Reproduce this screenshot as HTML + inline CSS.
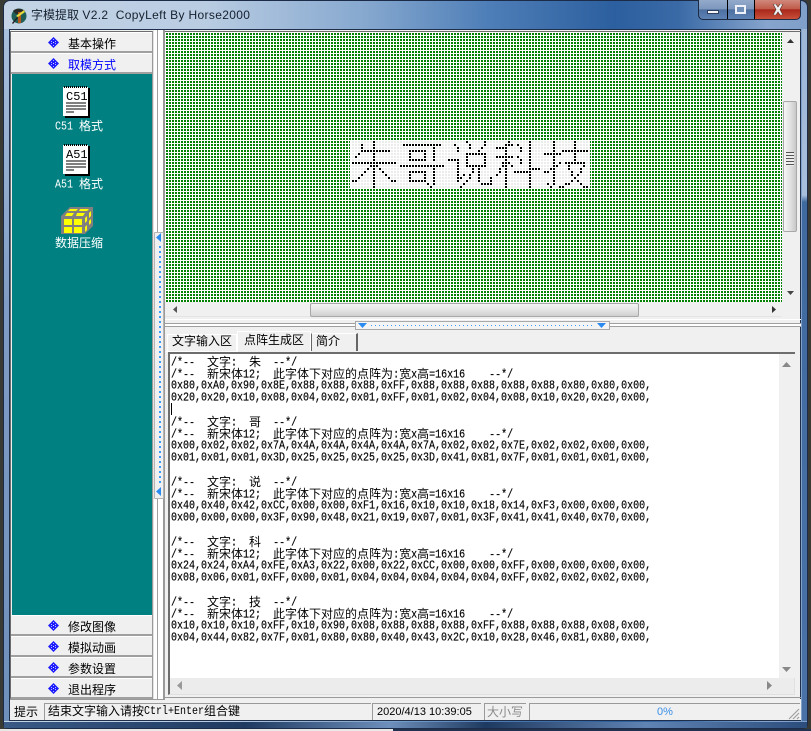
<!DOCTYPE html>
<html lang="zh">
<head>
<meta charset="utf-8">
<title>字模提取</title>
<style>
html,body{margin:0;padding:0;width:811px;height:731px;overflow:hidden;background:#3a3a34}
*{box-sizing:border-box}
.a{position:absolute}
body{font-family:"Liberation Sans","WenQuanYi Zen Hei","Noto Sans CJK SC",sans-serif;font-size:12px;color:#000}
#frame{left:3px;top:0;width:805px;height:729px;border:1px solid #1c2c48;border-radius:7px 7px 5px 5px;
background:linear-gradient(90deg,#c4d4e6 0,#b9cce2 25%,#86a8cf 45%,#4f7fb8 60%,#2c5f9f 76%,#3a6aa6 84%,#86a4cd 95%,#7f9fc9 100%)}
#lf{left:4px;top:29px;width:5px;height:692px;background:linear-gradient(180deg,#a9c0dc,#7f9cc4 40%,#6f90bb 100%)}
#rf{left:802px;top:29px;width:5px;height:692px;background:linear-gradient(180deg,#9db6d6 0,#a8bfdc 24%,#3f6a9f 25%,#4a72a6 100%)}
#bf{left:4px;top:722px;width:803px;height:6px;background:linear-gradient(90deg,#3a5a86,#1f3a60 30%,#6d8fbb 48%,#1f3a60 60%,#5f83b3 80%,#2c4d7c)}
#client{left:9px;top:29px;width:792px;height:692px;background:#f0f0f0;border:1px solid #1f2f4a}
.btn{left:11px;width:141px;height:21px;background:#f0f0f0;border-bottom:2px solid #a0a0a0;border-top:1px solid #fff}
.btn .t{position:absolute;left:57px;top:2px;white-space:nowrap}
.btn svg{position:absolute;left:37px;top:4px}
.sb{background:#f0f0f0}
.th{background:linear-gradient(180deg,#f4f4f4,#e4e4e4 50%,#cfcfcf);border:1px solid #a8a8a8;border-radius:2px}
.dotg{background-color:#008000;background-image:linear-gradient(90deg,transparent 2px,#fff 2px),linear-gradient(180deg,transparent 2px,#fff 2px);background-size:3px 3px;background-repeat:repeat}
.dotw{background-color:#ececec;background-image:linear-gradient(90deg,transparent 2px,#fff 2px),linear-gradient(180deg,transparent 2px,#fff 2px);background-size:3px 3px;background-repeat:repeat}
#memo{left:168px;top:352px;width:627px;height:326px;background:#fff;border-top:2px solid #6d6d6d;border-left:2px solid #6d6d6d;overflow:hidden}
#memo div{position:absolute;left:1px;height:12px;line-height:12px;white-space:pre;font-family:"Liberation Mono",monospace;font-size:10px;-webkit-text-stroke:.15px #000}
#memo div.h{transform:scaleY(1.2);transform-origin:0 80%;margin-top:2px}
#memo b{font-weight:normal;font-family:"WenQuanYi Zen Hei","Noto Sans CJK SC",sans-serif;font-size:12px;-webkit-text-stroke:0}
i{font-style:normal;display:inline-block;transform:scaleY(1.2);transform-origin:0 80%}
.tab{position:absolute;text-align:center;line-height:16px}
.lbl{position:absolute;color:#fff;white-space:pre;font-size:12px;line-height:12px}
.st{position:absolute;top:703px;height:17px;border-left:1px solid #9a9a9a;border-top:1px solid #9a9a9a;line-height:16px;white-space:nowrap}
</style>
</head>
<body>
<svg width="0" height="0" style="position:absolute"><defs>
<g id="dm"><path d="M5.500 0L11 5.500 5.500 11 0 5.500z" fill="#1c1cff"/><path d="M5 2h1v1H5zM3 4h1v1H3zM7 4h1v1H7zM3 6h1v1H3zM7 6h1v1H7zM5 8h1v1H5z" fill="#b8b8ff"/><path d="M5 5h1v1H5z" fill="#e0e0ff"/></g>
</defs></svg>
<div class="a" id="frame"></div>
<div class="a" id="lf"></div>
<div class="a" id="rf"></div>
<div class="a" id="bf"></div>
<div class="a" style="left:0;top:729px;width:393px;height:2px;background:#e8e8e8"></div>
<div class="a" style="left:393px;top:729px;width:418px;height:2px;background:#20324f"></div>

<!-- title icon -->
<svg class="a" style="left:10px;top:7px" width="18" height="18" viewBox="0 0 18 18">
<ellipse cx="9" cy="9" rx="7.500" ry="7.500" fill="#1f5f58"/>
<path d="M3 4c2-3 9-3 12 0l-3 3H6z" fill="#2a2a2a"/>
<path d="M8 5h3v11H8z" fill="#b5561d"/>
<path d="M6 9l8-6 1 2-7 5z" fill="#e6dc3c"/>
<path d="M2 16l5-6 1 1-5 6z" fill="#222"/>
</svg>
<div class="a" style="left:31px;top:7px;white-space:pre;color:#15202e;font-size:12px;line-height:16px"><span>字模提取</span> <span style="letter-spacing:.34px">V2.2  CopyLeft By Horse2000</span></div>

<!-- caption buttons -->
<div class="a" style="left:698px;top:0;width:103px;height:20px;border:1px solid #1d2c46;border-top:0;border-radius:0 0 5px 5px;overflow:hidden;background:#000">
  <div class="a" style="left:0;top:0;width:28px;height:19px;background:linear-gradient(180deg,#93aacb,#7c97bd 48%,#4c6f9f 50%,#5c82b4)"></div>
  <div class="a" style="left:29px;top:0;width:26px;height:19px;background:linear-gradient(180deg,#93aacb,#7c97bd 48%,#4c6f9f 50%,#5c82b4)"></div>
  <div class="a" style="left:56px;top:0;width:46px;height:19px;background:linear-gradient(180deg,#d0897c,#c05a4a 48%,#a8261a 50%,#c9503a)"></div>
  <div class="a" style="left:8px;top:10px;width:12px;height:4px;background:#f4f6fa;border:1px solid #2d3f5c"></div>
  <div class="a" style="left:36px;top:5px;width:11px;height:9px;border:2px solid #eef2f8;background:#6f8fb8"></div>
  <svg class="a" style="left:72px;top:4px" width="14" height="11" viewBox="0 0 14 11"><path d="M2 0h3l2 3 2-3h3L9 5.500 12 11H9L7 8 5 11H2l3-5.500z" fill="#eef0f2" stroke="#5a2a24" stroke-width=".6"/></svg>
</div>

<div class="a" id="client"></div>

<!-- left panel -->
<div class="a" style="left:10px;top:31px;width:143px;height:668px;border:1px solid #9a9a9a;border-left-color:#6d6d6d;border-top-color:#6d6d6d;background:#f0f0f0"></div>
<div class="a btn" style="top:32px"><svg width="11" height="11"><use href="#dm"/></svg><span class="t">基本操作</span></div>
<div class="a btn" style="top:53px;color:#00f"><svg width="11" height="11"><use href="#dm"/></svg><span class="t">取模方式</span></div>
<div class="a" style="left:12px;top:74px;width:140px;height:541px;background:#008080"></div>

<!-- C51 icon -->
<svg class="a" style="left:63px;top:86px" width="28" height="32" viewBox="0 0 28 32">
<rect x="2" y="2" width="25" height="30" fill="#000"/><rect x="0" y="1" width="25" height="29" fill="#fff"/>
<path d="M1 1h24" stroke="#000" stroke-width="2" stroke-dasharray="1 1"/>
<path d="M3 17h20M3 20h20M3 23h20M3 26h8" stroke="#000"/>
<text x="3" y="14" font-family="Liberation Mono,monospace" font-size="12" fill="#000">C51</text>
</svg>
<div class="lbl" style="left:55px;top:121px;font-family:'Liberation Mono','WenQuanYi Zen Hei',monospace"><i style="font-size:10px">C51 </i>格式</div>

<!-- A51 icon -->
<svg class="a" style="left:63px;top:144px" width="28" height="32" viewBox="0 0 28 32">
<rect x="2" y="2" width="25" height="30" fill="#000"/><rect x="0" y="1" width="25" height="29" fill="#fff"/>
<path d="M1 1h24" stroke="#000" stroke-width="2" stroke-dasharray="1 1"/>
<path d="M3 17h20M3 20h20M3 23h20M3 26h8" stroke="#000"/>
<text x="3" y="14" font-family="Liberation Mono,monospace" font-size="12" fill="#000">A51</text>
</svg>
<div class="lbl" style="left:55px;top:179px;font-family:'Liberation Mono','WenQuanYi Zen Hei',monospace"><i style="font-size:10px">A51 </i>格式</div>

<!-- cube icon -->
<svg class="a" style="left:61px;top:206px" width="33" height="28" viewBox="0 0 33 28">
<path d="M0 10L9 1h23v19l-8 8H0z" fill="#808080"/>
<path d="M3 13h8v6H3zM13 13h8v6h-8zM3 21h8v6H3zM13 21h8v6h-8z" fill="#ff0"/>
<path d="M9 3h8l-2 2H7zM19 3h9l-2 2h-8zM6 7h7l-2 3H4zM16 7h8l-2 3h-7z" fill="#ff0"/>
<path d="M24 12l2-2v5l-2 2zM28 7l2-2v5l-2 2zM24 21l2-2v5l-2 2zM28 15l2-2v4l-2 2z" fill="#ff0"/>
</svg>
<div class="lbl" style="left:55px;top:237px">数据压缩</div>

<div class="a btn" style="top:615px"><svg width="11" height="11"><use href="#dm"/></svg><span class="t">修改图像</span></div>
<div class="a btn" style="top:636px"><svg width="11" height="11"><use href="#dm"/></svg><span class="t">模拟动画</span></div>
<div class="a btn" style="top:657px"><svg width="11" height="11"><use href="#dm"/></svg><span class="t">参数设置</span></div>
<div class="a btn" style="top:678px"><svg width="11" height="11"><use href="#dm"/></svg><span class="t">退出程序</span></div>

<!-- vertical splitter -->
<div class="a" style="left:153px;top:30px;width:12px;height:670px;background:#fff;border-left:1px solid #e4e4e4;border-right:2px solid #9a9a9a"></div>
<div class="a" style="left:157px;top:30px;width:1px;height:670px;background:#a0a0a0"></div>
<div class="a" style="left:154px;top:232px;width:10px;height:267px;background:#f0f0f0;border:1px solid #b4b4b4;border-radius:1px"></div>
<div class="a" style="left:159px;top:246px;width:2px;height:240px;background:repeating-linear-gradient(180deg,#3a9aff 0 2px,transparent 2px 5px)"></div>
<svg class="a" style="left:156px;top:233px" width="6" height="10"><path d="M5 0v9L0 4.500z" fill="#2a8af0"/></svg>
<svg class="a" style="left:156px;top:487px" width="6" height="10"><path d="M5 0v9L0 4.500z" fill="#2a8af0"/></svg>

<!-- top border of grid -->
<div class="a" style="left:165px;top:31px;width:636px;height:1px;background:#6d6d6d"></div>

<!-- dot grid -->
<div class="a" style="left:165px;top:32px;width:617px;height:270px;background:#fff"></div>
<div class="a dotg" style="left:166px;top:33px;width:616px;height:269px"></div>
<div class="a" style="left:350px;top:140px;width:240px;height:49px;background:#fff"></div>
<div class="a dotw" style="left:352px;top:141px;width:238px;height:48px"></div>
<svg class="a" id="grid" style="left:165px;top:32px;shape-rendering:crispEdges" width="617" height="270" viewBox="0 0 617 270">
<path id="dots" fill="#000" d=""/>
</svg>
<script>
(function(){
var h=[
[0x80,0xA0,0x90,0x8E,0x88,0x88,0x88,0xFF,0x88,0x88,0x88,0x88,0x88,0x80,0x80,0x00,0x20,0x20,0x10,0x08,0x04,0x02,0x01,0xFF,0x01,0x02,0x04,0x08,0x10,0x20,0x20,0x00],
[0x00,0x02,0x02,0x7A,0x4A,0x4A,0x4A,0x4A,0x7A,0x02,0x02,0x7E,0x02,0x02,0x00,0x00,0x01,0x01,0x01,0x3D,0x25,0x25,0x25,0x25,0x3D,0x41,0x81,0x7F,0x01,0x01,0x01,0x00],
[0x40,0x40,0x42,0xCC,0x00,0x00,0xF1,0x16,0x10,0x10,0x18,0x14,0xF3,0x00,0x00,0x00,0x00,0x00,0x00,0x3F,0x90,0x48,0x21,0x19,0x07,0x01,0x3F,0x41,0x41,0x40,0x70,0x00],
[0x24,0x24,0xA4,0xFE,0xA3,0x22,0x00,0x22,0xCC,0x00,0x00,0xFF,0x00,0x00,0x00,0x00,0x08,0x06,0x01,0xFF,0x00,0x01,0x04,0x04,0x04,0x04,0x04,0xFF,0x02,0x02,0x02,0x00],
[0x10,0x10,0x10,0xFF,0x10,0x90,0x08,0x88,0x88,0x88,0xFF,0x88,0x88,0x88,0x08,0x00,0x04,0x44,0x82,0x7F,0x01,0x80,0x80,0x40,0x43,0x2C,0x10,0x28,0x46,0x81,0x80,0x00]];
var d="";
for(var c=0;c<5;c++)for(var p=0;p<2;p++)for(var i=0;i<16;i++){var b=h[c][p*16+i];
 for(var k=0;k<8;k++)if(b>>k&1){var x=187+(c*16+i)*3,y=109+(p*8+k)*3;d+="M"+x+" "+y+"h2v2h-2z";}}
document.getElementById("dots").setAttribute("d",d);
})();
</script>

<!-- grid v scrollbar -->
<div class="a sb" style="left:782px;top:32px;width:17px;height:286px"></div>
<svg class="a" style="left:786px;top:38px" width="9" height="6"><path d="M4.500 1L8 5H1z" fill="#333"/></svg>
<div class="a th" style="left:783px;top:101px;width:14px;height:131px;background:linear-gradient(90deg,#f6f6f6,#e2e2e2 50%,#c8c8c8)"></div>
<div class="a" style="left:786px;top:152px;width:8px;height:14px;background:repeating-linear-gradient(180deg,#555 0 1px,#eee 1px 3px)"></div>
<svg class="a" style="left:786px;top:290px" width="9" height="6"><path d="M1 1h7L4.500 5z" fill="#444"/></svg>

<!-- grid h scrollbar -->
<div class="a sb" style="left:165px;top:302px;width:617px;height:15px;border-bottom:1px solid #e4e4e4"></div>
<svg class="a" style="left:172px;top:305px" width="6" height="9"><path d="M5 1v7L1 4.500z" fill="#555"/></svg>
<div class="a th" style="left:310px;top:303px;width:329px;height:14px"></div>
<svg class="a" style="left:771px;top:305px" width="6" height="9"><path d="M1 1v7l4-3.500z" fill="#333"/></svg>

<!-- horizontal splitter -->
<div class="a" style="left:165px;top:319px;width:636px;height:1px;background:#fff"></div>
<div class="a" style="left:165px;top:323px;width:636px;height:4px;border-top:1px solid #a0a0a0;border-bottom:1px solid #a0a0a0;background:#fff"></div>
<div class="a" style="left:355px;top:321px;width:255px;height:9px;background:#f4f4f4;border:1px solid #a8a8a8"></div>
<div class="a" style="left:371px;top:325px;width:222px;height:1px;background:repeating-linear-gradient(90deg,#3a9aff 0 1px,transparent 1px 4px)"></div>
<svg class="a" style="left:358px;top:323px" width="9" height="5"><path d="M0 0h9L4.500 5z" fill="#2a8af0"/></svg>
<svg class="a" style="left:597px;top:323px" width="9" height="5"><path d="M0 0h9L4.500 5z" fill="#2a8af0"/></svg>

<!-- tabs -->
<div class="a" style="left:167px;top:334px;width:70px;height:17px;background:#f0f0f0;border:1px solid #fff;border-bottom:0"><div class="tab" style="left:0;top:-2px;width:68px">文字输入区</div></div>
<div class="a" style="left:311px;top:333px;width:47px;height:18px;background:#f0f0f0;border-top:1px solid #fff;border-left:1px solid #666;border-right:2px solid #666"><div class="tab" style="left:0;top:-1px;width:28px;margin-left:2px;white-space:nowrap">简介</div></div>
<div class="a" style="left:237px;top:331px;width:74px;height:21px;background:#f0f0f0;border:1px solid #fff;border-bottom:0"><div class="tab" style="left:0;top:0;width:72px">点阵生成区</div></div>
<div class="a" style="left:166px;top:351px;width:71px;height:1px;background:#fff"></div>

<!-- memo -->
<div class="a" id="memo">
<div style="top:2px"><i>/*--  </i><b>文字</b><i>:  </i><b>朱</b><i>  --*/</i></div>
<div style="top:14px"><i>/*--  </i><b>新宋体</b><i>12;  </i><b>此字体下对应的点阵为</b><i>:</i><b>宽</b><i>x</i><b>高</b><i>=16x16    --*/</i></div>
<div class="h" style="top:26px">0x80,0xA0,0x90,0x8E,0x88,0x88,0x88,0xFF,0x88,0x88,0x88,0x88,0x88,0x80,0x80,0x00,</div>
<div class="h" style="top:38px">0x20,0x20,0x10,0x08,0x04,0x02,0x01,0xFF,0x01,0x02,0x04,0x08,0x10,0x20,0x20,0x00,</div>
<div style="top:62px"><i>/*--  </i><b>文字</b><i>:  </i><b>哥</b><i>  --*/</i></div>
<div style="top:74px"><i>/*--  </i><b>新宋体</b><i>12;  </i><b>此字体下对应的点阵为</b><i>:</i><b>宽</b><i>x</i><b>高</b><i>=16x16    --*/</i></div>
<div class="h" style="top:86px">0x00,0x02,0x02,0x7A,0x4A,0x4A,0x4A,0x4A,0x7A,0x02,0x02,0x7E,0x02,0x02,0x00,0x00,</div>
<div class="h" style="top:98px">0x01,0x01,0x01,0x3D,0x25,0x25,0x25,0x25,0x3D,0x41,0x81,0x7F,0x01,0x01,0x01,0x00,</div>
<div style="top:122px"><i>/*--  </i><b>文字</b><i>:  </i><b>说</b><i>  --*/</i></div>
<div style="top:134px"><i>/*--  </i><b>新宋体</b><i>12;  </i><b>此字体下对应的点阵为</b><i>:</i><b>宽</b><i>x</i><b>高</b><i>=16x16    --*/</i></div>
<div class="h" style="top:146px">0x40,0x40,0x42,0xCC,0x00,0x00,0xF1,0x16,0x10,0x10,0x18,0x14,0xF3,0x00,0x00,0x00,</div>
<div class="h" style="top:158px">0x00,0x00,0x00,0x3F,0x90,0x48,0x21,0x19,0x07,0x01,0x3F,0x41,0x41,0x40,0x70,0x00,</div>
<div style="top:182px"><i>/*--  </i><b>文字</b><i>:  </i><b>科</b><i>  --*/</i></div>
<div style="top:194px"><i>/*--  </i><b>新宋体</b><i>12;  </i><b>此字体下对应的点阵为</b><i>:</i><b>宽</b><i>x</i><b>高</b><i>=16x16    --*/</i></div>
<div class="h" style="top:206px">0x24,0x24,0xA4,0xFE,0xA3,0x22,0x00,0x22,0xCC,0x00,0x00,0xFF,0x00,0x00,0x00,0x00,</div>
<div class="h" style="top:218px">0x08,0x06,0x01,0xFF,0x00,0x01,0x04,0x04,0x04,0x04,0x04,0xFF,0x02,0x02,0x02,0x00,</div>
<div style="top:242px"><i>/*--  </i><b>文字</b><i>:  </i><b>技</b><i>  --*/</i></div>
<div style="top:254px"><i>/*--  </i><b>新宋体</b><i>12;  </i><b>此字体下对应的点阵为</b><i>:</i><b>宽</b><i>x</i><b>高</b><i>=16x16    --*/</i></div>
<div class="h" style="top:266px">0x10,0x10,0x10,0xFF,0x10,0x90,0x08,0x88,0x88,0x88,0xFF,0x88,0x88,0x88,0x08,0x00,</div>
<div class="h" style="top:278px">0x04,0x44,0x82,0x7F,0x01,0x80,0x80,0x40,0x43,0x2C,0x10,0x28,0x46,0x81,0x80,0x00,</div>
</div>
<div class="a" style="left:171px;top:403px;width:1px;height:12px;background:#000"></div>

<!-- memo scrollbars -->
<div class="a" style="left:779px;top:354px;width:16px;height:324px;background:#f0f0f0"></div>
<svg class="a" style="left:782px;top:362px" width="9" height="6"><path d="M4.500 0L9 5H0z" fill="#888"/></svg>
<svg class="a" style="left:782px;top:667px" width="9" height="6"><path d="M0 0h9L4.500 5z" fill="#888"/></svg>
<div class="a" style="left:168px;top:678px;width:627px;height:17px;background:#ececec;border-bottom:1px solid #e0e0e0;border-right:1px solid #e0e0e0;border-left:2px solid #6d6d6d"></div>
<svg class="a" style="left:177px;top:681px" width="6" height="9"><path d="M5 0v9L0 4.500z" fill="#999"/></svg>
<svg class="a" style="left:767px;top:681px" width="6" height="9"><path d="M0 0v9l5-4.500z" fill="#888"/></svg>
<div class="a" style="left:165px;top:697px;width:636px;height:1px;background:#9a9a9a"></div>

<!-- status bar -->
<div class="a" style="left:10px;top:699px;width:791px;height:22px;background:#f0f0f0;border-bottom:1px solid #1f2f4a"></div>
<div class="a" style="left:10px;top:699px;width:155px;height:1px;background:#9a9a9a"></div>
<div class="st" style="left:11px;width:32px;border-left:0;border-top:0;padding-left:3px;top:704px;font-family:'WenQuanYi Zen Hei','Noto Sans CJK SC',sans-serif">提示</div>
<div class="st" style="left:44px;width:327px;padding-left:3px;font-family:'Liberation Mono','WenQuanYi Zen Hei',monospace">结束文字输入请按<i style="font-size:10px">Ctrl+Enter</i>组合键</div>
<div class="st" style="left:372px;width:109px;padding-left:4px;font-size:11px">2020/4/13 10:39:05</div>
<div class="st" style="left:484px;width:42px;padding-left:2px;color:#8a8a8a;font-size:12px">大小写</div>
<div class="st" style="left:529px;width:271px;text-align:center;color:#3a8fe8;font-size:11px;padding-left:0">0%</div>
<svg class="a" style="left:788px;top:708px" width="12" height="12"><path d="M11 1L1 11M11 5l-6 6M11 9l-2 2" stroke="#a0a0a0" stroke-width="1.200"/></svg>
</body>
</html>
